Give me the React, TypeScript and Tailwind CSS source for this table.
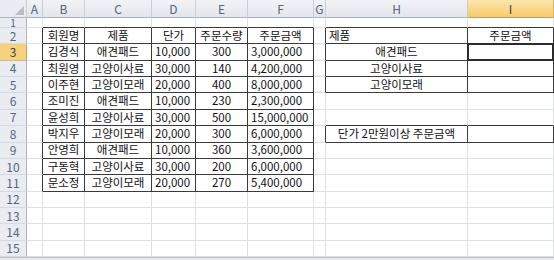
import React from 'react';

const colWidths = [27, 16, 42, 67, 44, 52, 66, 12, 142, 86];
const colNames = ['', 'A', 'B', 'C', 'D', 'E', 'F', 'G', 'H', 'I'];

type Align = 'left' | 'center';
type Cell = { text: string; align: Align };

const table = [
  ['회원명', '제품', '단가', '주문수량', '주문금액'],
  ['김경식', '애견패드', '10,000', '300', '3,000,000'],
  ['최원영', '고양이사료', '30,000', '140', '4,200,000'],
  ['이주현', '고양이모래', '20,000', '400', '8,000,000'],
  ['조미진', '애견패드', '10,000', '230', '2,300,000'],
  ['윤성희', '고양이사료', '30,000', '500', '15,000,000'],
  ['박지우', '고양이모래', '20,000', '300', '6,000,000'],
  ['안영희', '애견패드', '10,000', '360', '3,600,000'],
  ['구동혁', '고양이사료', '30,000', '200', '6,000,000'],
  ['문소정', '고양이모래', '20,000', '270', '5,400,000'],
];

const boxes = [
  { r1: 2, r2: 11, c1: 2, c2: 6 },
  { r1: 2, r2: 5, c1: 8, c2: 9 },
  { r1: 8, r2: 8, c1: 8, c2: 9 },
];

function inBox(r: number, c: number) {
  return boxes.some((b) => r >= b.r1 && r <= b.r2 && c >= b.c1 && c <= b.c2);
}

function getCell(r: number, c: number): Cell | null {
  if (r >= 2 && r <= 11 && c >= 2 && c <= 6) {
    const text = table[r - 2][c - 2];
    // 단가, 주문금액 values sit on the left like text
    if (r > 2 && (c === 4 || c === 6)) return { text, align: 'left' };
    return { text, align: 'center' };
  }
  if (c === 8) {
    if (r === 2) return { text: '제품', align: 'left' };
    if (r === 3) return { text: '애견패드', align: 'center' };
    if (r === 4) return { text: '고양이사료', align: 'center' };
    if (r === 5) return { text: '고양이모래', align: 'center' };
    if (r === 8) return { text: '단가 2만원이상 주문금액', align: 'center' };
  }
  if (c === 9 && r === 2) return { text: '주문금액', align: 'center' };
  return null;
}

function ColumnHeader({ index }: { index: number }) {
  if (index === 0) {
    return (
      <div className="relative bg-[#e9ecf0] border-r border-b border-r-[#c8ced6] border-b-[#a9b4c2]">
        <div className="absolute right-[2px] bottom-[2px] w-0 h-0 border-l-[9px] border-l-transparent border-b-[9px] border-b-[#b9bec6]" />
      </div>
    );
  }
  const selected = index === 9;
  return (
    <div
      className={
        'flex items-center justify-center border-r border-b text-[12px] leading-none ' +
        (selected
          ? 'bg-linear-to-b from-[#fbe6ac] to-[#f6cb6a] border-r-[#d9b461] border-b-[#c9a24c] text-[#3b3f46]'
          : 'bg-linear-to-b from-[#f1f3f6] to-[#e2e6eb] border-r-[#c8ced6] border-b-[#a9b4c2] text-[#56657a]')
      }
    >
      {colNames[index]}
    </div>
  );
}

function RowHeader({ row }: { row: number }) {
  const selected = row === 3;
  return (
    <div
      className={
        'flex items-center justify-center border-r border-b ' +
        (row === 1 ? 'text-[10px] leading-[8px] ' : 'text-[12px] leading-none ') +
        (selected
          ? 'bg-[#f7d27c] border-r-[#c9a24c] border-b-[#e0bb66] text-[#3b3f46]'
          : 'bg-[#e9edf2] border-r-[#a9b4c2] border-b-[#d5dae1] text-[#56657a]')
      }
    >
      {row}
    </div>
  );
}

function DataCell({ r, c }: { r: number; c: number }) {
  const cell = getCell(r, c);
  const rightDark = inBox(r, c) || inBox(r, c + 1);
  const bottomDark = inBox(r, c) || inBox(r + 1, c);
  const selected = r === 3 && c === 9;
  return (
    <div
      className={
        'relative flex items-center border-r border-b whitespace-nowrap overflow-visible text-[11.5px] leading-none text-[#111] ' +
        (rightDark ? 'border-r-[#3a3a3a] ' : 'border-r-[#dde0e4] ') +
        (bottomDark ? 'border-b-[#3a3a3a] ' : 'border-b-[#dde0e4] ') +
        (cell?.align === 'left' ? 'justify-start pl-[3px]' : 'justify-center')
      }
    >
      {cell?.text}
      {selected && <div className="absolute -left-[1px] -top-[1px] -right-[1px] -bottom-[1px] border-2 border-[#2b2b2b]" />}
    </div>
  );
}

export default function App() {
  const rows = Array.from({ length: 15 }, (_, i) => i + 1);
  return (
    <div
      className="w-[554px] h-[260px] overflow-hidden bg-white"
      style={{ fontFamily: '"Malgun Gothic", "Noto Sans CJK KR", "Noto Sans", sans-serif' }}
    >
      <div className="grid grid-cols-[27px_16px_42px_67px_44px_52px_66px_12px_142px_86px] grid-rows-[18px_10px_repeat(14,16.36px)]">
        {colWidths.map((_, i) => (
          <ColumnHeader key={'h' + i} index={i} />
        ))}
        {rows.map((r) => (
          <React.Fragment key={r}>
            <RowHeader row={r} />
            {colWidths.slice(1).map((_, j) => (
              <DataCell key={r + '-' + j} r={r} c={j + 1} />
            ))}
          </React.Fragment>
        ))}
      </div>
      <div className="h-[10px] border-t border-t-[#b9c0c9] bg-[#e6e9ed]" />
    </div>
  );
}
